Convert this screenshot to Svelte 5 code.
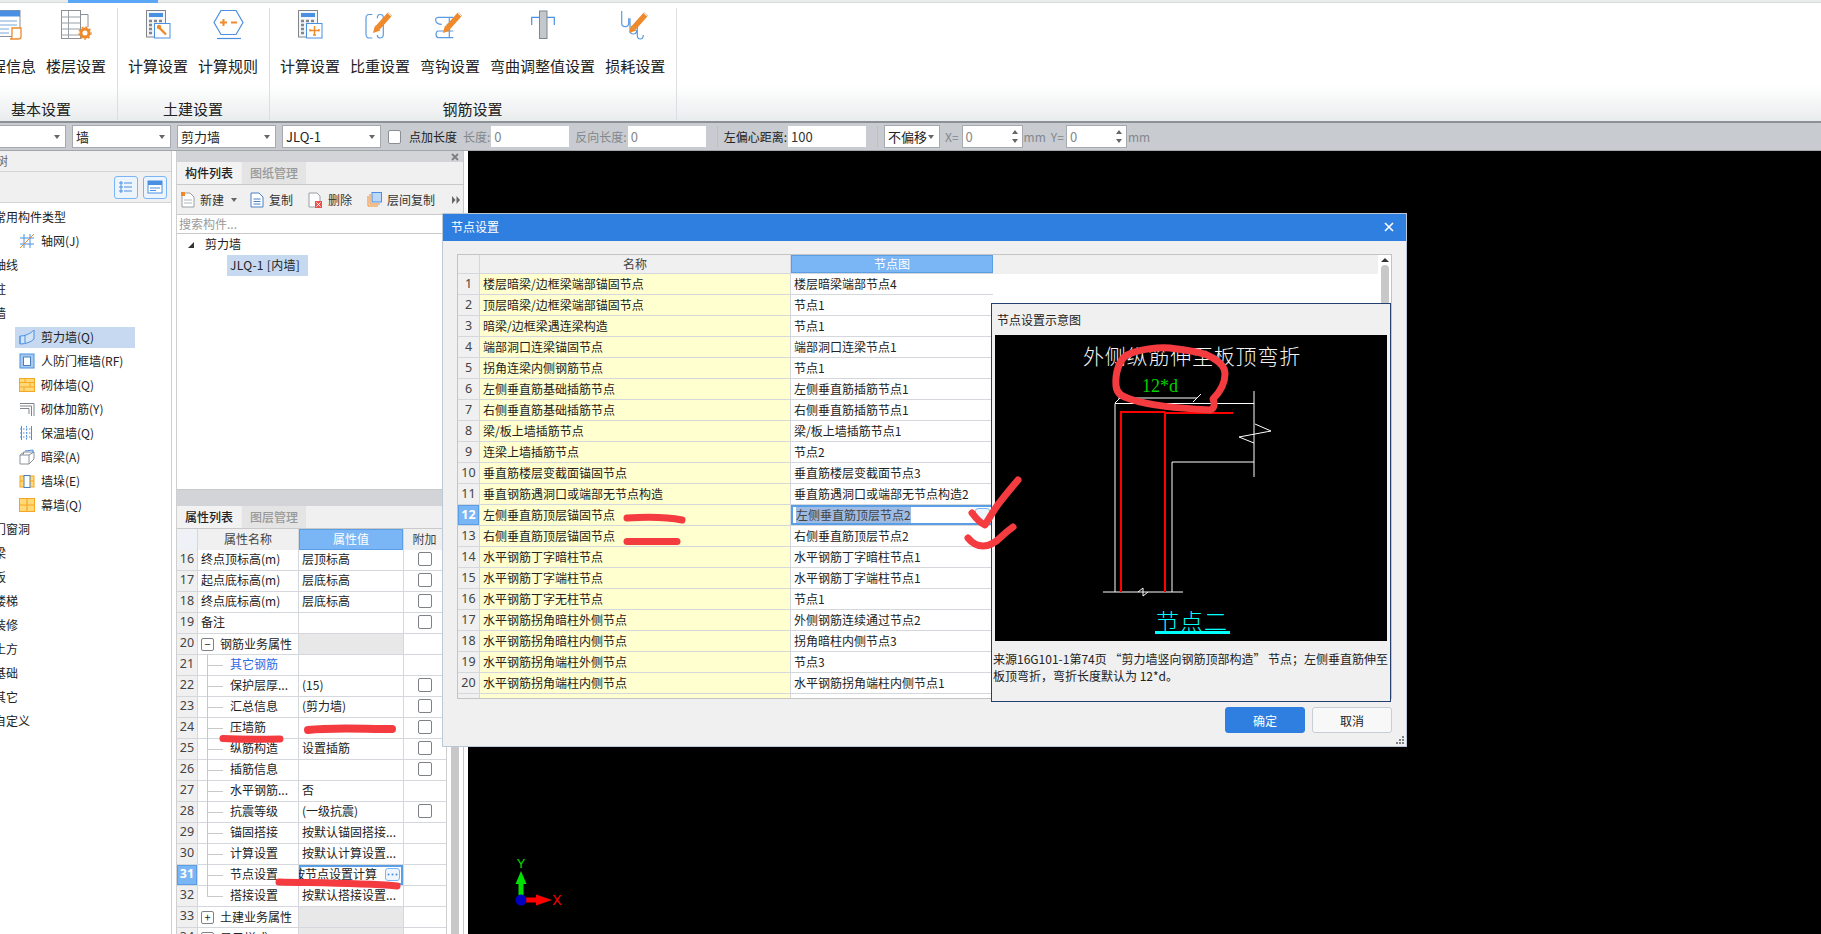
<script>
  const propRows = [
    { n: 16, name: '终点顶标高(m)', val: '层顶标高', check: true },
    { n: 17, name: '起点底标高(m)', val: '层底标高', check: true },
    { n: 18, name: '终点底标高(m)', val: '层底标高', check: true },
    { n: 19, name: '备注', val: '', check: true },
    { n: 20, name: '钢筋业务属性', group: '−' },
    { n: 21, name: '其它钢筋', val: '', child: true, link: true },
    { n: 22, name: '保护层厚...', val: '(15)', child: true, check: true },
    { n: 23, name: '汇总信息', val: '(剪力墙)', child: true, check: true },
    { n: 24, name: '压墙筋', val: '', child: true, check: true },
    { n: 25, name: '纵筋构造', val: '设置插筋', child: true, check: true },
    { n: 26, name: '插筋信息', val: '', child: true, check: true },
    { n: 27, name: '水平钢筋...', val: '否', child: true },
    { n: 28, name: '抗震等级', val: '(一级抗震)', child: true, check: true },
    { n: 29, name: '锚固搭接', val: '按默认锚固搭接...', child: true },
    { n: 30, name: '计算设置', val: '按默认计算设置...', child: true },
    { n: 31, name: '节点设置', val: '按节点设置计算', child: true, active: true },
    { n: 32, name: '搭接设置', val: '按默认搭接设置...', child: true, last: true },
    { n: 33, name: '土建业务属性', group: '+' },
    { n: 34, name: '显示样式', group: '+' }
  ];

  const nodeRows = [
    ['楼层暗梁/边框梁端部锚固节点', '楼层暗梁端部节点4'],
    ['顶层暗梁/边框梁端部锚固节点', '节点1'],
    ['暗梁/边框梁遇连梁构造', '节点1'],
    ['端部洞口连梁锚固节点', '端部洞口连梁节点1'],
    ['拐角连梁内侧钢筋节点', '节点1'],
    ['左侧垂直筋基础插筋节点', '左侧垂直筋插筋节点1'],
    ['右侧垂直筋基础插筋节点', '右侧垂直筋插筋节点1'],
    ['梁/板上墙插筋节点', '梁/板上墙插筋节点1'],
    ['连梁上墙插筋节点', '节点2'],
    ['垂直筋楼层变截面锚固节点', '垂直筋楼层变截面节点3'],
    ['垂直钢筋遇洞口或端部无节点构造', '垂直筋遇洞口或端部无节点构造2'],
    ['左侧垂直筋顶层锚固节点', '左侧垂直筋顶层节点2'],
    ['右侧垂直筋顶层锚固节点', '右侧垂直筋顶层节点2'],
    ['水平钢筋丁字暗柱节点', '水平钢筋丁字暗柱节点1'],
    ['水平钢筋丁字端柱节点', '水平钢筋丁字端柱节点1'],
    ['水平钢筋丁字无柱节点', '节点1'],
    ['水平钢筋拐角暗柱外侧节点', '外侧钢筋连续通过节点2'],
    ['水平钢筋拐角暗柱内侧节点', '拐角暗柱内侧节点3'],
    ['水平钢筋拐角端柱外侧节点', '节点3'],
    ['水平钢筋拐角端柱内侧节点', '水平钢筋拐角端柱内侧节点1'],
    ['', '']
  ];

  const treeTop = [
    { text: '常用构件类型' },
    { text: '轴网(J)', icon: 'grid' },
    { text: '轴线' },
    { text: '柱' },
    { text: '墙' },
    { text: '剪力墙(Q)', icon: 'shear', selected: true },
    { text: '人防门框墙(RF)', icon: 'frame' },
    { text: '砌体墙(Q)', icon: 'brick' },
    { text: '砌体加筋(Y)', icon: 'rebar' },
    { text: '保温墙(Q)', icon: 'insul' },
    { text: '暗梁(A)', icon: 'beam' },
    { text: '墙垛(E)', icon: 'pier' },
    { text: '幕墙(Q)', icon: 'curtain' },
    { text: '门窗洞' },
    { text: '梁' },
    { text: '板' },
    { text: '楼梯' },
    { text: '装修' },
    { text: '土方' },
    { text: '基础' },
    { text: '其它' },
    { text: '自定义' }
  ];
</script>

{#snippet pencil()}
  <path d="M15.500 18L28 4" stroke="#ee8a2c" stroke-width="5.500" />
  <path d="M11 23l2-7.500 5.500 5z" fill="#ee8a2c" />
  <path d="M25.500 2.800l4.500 4" stroke="#fff" />
{/snippet}

{#snippet ribbonIcon(name)}
  <svg class="r-icon" viewBox="0 0 36 32" width="36" height="32" fill="none">
    {#if name === 'info'}
      <rect x="8" y="0.500" width="24" height="26" fill="#fff" stroke="#8a9199" />
      <rect x="8" y="0.500" width="24" height="6" fill="#4a90e2" />
      <path d="M11 11h18M11 15h18M11 19h10M11 23h10" stroke="#7aa7d8" />
      <path d="M24 18h9v9c0 2-2 2-3 2h-8c2 0 2-1 2-3z" fill="#fff" stroke="#ee8a2c" stroke-width="1.300" />
    {:else if name === 'floor'}
      <rect x="3.500" y="0.500" width="19" height="28" fill="#fff" stroke="#8a9199" />
      <path d="M3 7h19M3 13h19M3 19h19M3 25h19M10.500 1v28" stroke="#9aa0a6" />
      <path d="M22 4.500h8V17" stroke="#8a9199" />
      <circle cx="27" cy="23" r="4" fill="none" stroke="#ee8a2c" stroke-width="3" />
      <circle cx="27" cy="23" r="6" fill="none" stroke="#ee8a2c" stroke-width="1.400" stroke-dasharray="2 2" />
    {:else if name === 'calcWrench' || name === 'calcFork'}
      <rect x="6.500" y="0.500" width="19" height="26.500" fill="#f4f5f6" stroke="#80868c" />
      <rect x="9" y="3" width="14" height="4" fill="#4a90e2" />
      <path d="M9 11h3M14 11h3M19 11h3M9 15h3M14 15h3M9 19h3M9 23h3" stroke="#80868c" stroke-width="2.500" />
      <rect x="14.500" y="13.500" width="15.500" height="14.500" fill="#fff" stroke="#4a90e2" />
      {#if name === 'calcWrench'}
        <path d="M19 17.500l7 7" stroke="#ee8a2c" stroke-width="2.400" />
        <circle cx="19" cy="17" r="2.200" fill="#ee8a2c" />
      {:else}
        <path d="M22.500 16v9M18 20.500h9M18 19v2.500M27 19v2.500M21 25h3" stroke="#ee8a2c" stroke-width="1.400" />
      {/if}
    {:else if name === 'rule'}
      <path d="M11 0.500h15l7 12-7 12H11L4 12.500z" fill="#fff" stroke="#4a90e2" stroke-width="1.200" />
      <path d="M10 12.500h7M13.500 9v7M21 12.500h6" stroke="#ee8a2c" stroke-width="2" />
      <path d="M7 28.500h24" stroke="#4a90e2" stroke-width="1.200" />
    {:else if name === 'ratio'}
      <path d="M10.300 4.500H7c-2 0-3 1.500-3 3.500v16.500c0 2 1.500 3.500 3 3.500h3.300M15.300 8.300c0-2.500 1.200-3.800 2.700-3.800 2 0 3.300 1 3.300 2.800v17.200c0 2-1.500 3.500-3.300 3.500-1.500 0-2.700-1-2.700-3" stroke="#5a9be0" stroke-width="1.200" />
      {@render pencil()}
    {:else if name === 'hook'}
      <path d="M21.300 7.300h-15c-2.500 0-3 2-2.500 3.500.5 2 2.500 3.500 6 3.500M14.700 14.300h6.600M17.300 7.300v20.400M21.300 21h-15c-3 0-3 6.700 0 6.700h15" stroke="#5a9be0" stroke-width="1.200" />
      {@render pencil()}
    {:else if name === 'bend'}
      <path d="M6.700 15V7.300h22.600V15" stroke="#4a90e2" stroke-width="1.200" />
      <rect x="14.500" y="1" width="7.500" height="27.500" fill="#c3c8cd" stroke="#80868c" />
    {:else if name === 'loss'}
      <path d="M4.700 1v12.300c0 2 1.500 3.400 3.500 3.400s3.500-1.400 3.500-3.400v-5M13 8.300V20c0 2.500 1.500 4 3.300 4s3.400-1.500 3.400-4M20.300 15v10c0 2.500 1.200 4 2.900 4s3.100-1.500 3.100-4" stroke="#5a9be0" stroke-width="1.200" />
      <g transform="translate(1 0)">{@render pencil()}</g>
    {/if}
  </svg>
{/snippet}

{#snippet treeIcon(name)}
  <svg viewBox="0 0 16 16" width="16" height="16" fill="none">
    {#if name === 'grid'}
      <path d="M1 5h14M1 11h14M5 1v14M11 1v14" stroke="#4a90e2" />
      <path d="M1 15L15 1" stroke="#ee8a2c" />
    {:else if name === 'shear'}
      <path d="M1 7c5 0 10-2 14-6v9c-3 3-8 5-14 5z" fill="#d3e4f6" stroke="#4a90e2" />
      <path d="M1 7v8M6 6v8" stroke="#4a90e2" />
    {:else if name === 'frame'}
      <rect x="1" y="1" width="14" height="14" fill="#a9cbef" stroke="#4a90e2" />
      <rect x="4.500" y="4" width="7" height="8.500" fill="#fff" stroke="#4a80c0" />
    {:else if name === 'brick' || name === 'curtain'}
      <rect x="0.500" y="1.500" width="15" height="13" fill="#ffd976" stroke="#f5a623" />
      {#if name === 'brick'}
        <path d="M1 5.500h14M1 10h14M6 2v3.500M11 5.500V10M5 10v4.500" stroke="#f5a623" />
      {:else}
        <path d="M1 8h14M8 2v12" stroke="#f5a623" stroke-width="1.200" />
      {/if}
    {:else if name === 'rebar'}
      <path d="M1 2.500h14V15M1 5h11.500v10M1 7.500h9V13" stroke="#80868c" />
    {:else if name === 'insul'}
      <path d="M2.500 1v14M12.500 1v14" stroke="#4a90e2" />
      <path d="M7.500 1v14M1 4h11M1 8h11M1 12h11" stroke="#4a90e2" stroke-dasharray="1.500 1.500" />
    {:else if name === 'beam'}
      <path d="M1 6l4-3h10v7l-5 5H1z" fill="#fff" stroke="#8a9199" />
      <path d="M1 6h9l5-3M10 6v9M5 3l-1 3" stroke="#8a9199" />
      <path d="M6 2l8-1v3" stroke="#4a90e2" />
    {:else if name === 'pier'}
      <rect x="1" y="3" width="14" height="11" fill="#ffd976" stroke="#f5a623" />
      <rect x="5" y="2.500" width="6" height="12" fill="#fff" stroke="#4a80c0" />
      <path d="M1 8h4M11 8h4" stroke="#f5a623" />
    {/if}
  </svg>
{/snippet}

<div class="app">
  <header class="ribbon">
    <span class="ribbon-tab"></span>
    <section class="r-group first">
      <div class="r-buttons">
        <div class="r-btn">{@render ribbonIcon('info')}<span>工程信息</span></div>
        <div class="r-btn">{@render ribbonIcon('floor')}<span>楼层设置</span></div>
      </div>
      <div class="r-label">基本设置</div>
    </section>
    <section class="r-group">
      <div class="r-buttons">
        <div class="r-btn">{@render ribbonIcon('calcWrench')}<span>计算设置</span></div>
        <div class="r-btn">{@render ribbonIcon('rule')}<span>计算规则</span></div>
      </div>
      <div class="r-label">土建设置</div>
    </section>
    <section class="r-group">
      <div class="r-buttons">
        <div class="r-btn">{@render ribbonIcon('calcFork')}<span>计算设置</span></div>
        <div class="r-btn">{@render ribbonIcon('ratio')}<span>比重设置</span></div>
        <div class="r-btn">{@render ribbonIcon('hook')}<span>弯钩设置</span></div>
        <div class="r-btn">{@render ribbonIcon('bend')}<span>弯曲调整值设置</span></div>
        <div class="r-btn">{@render ribbonIcon('loss')}<span>损耗设置</span></div>
      </div>
      <div class="r-label">钢筋设置</div>
    </section>
  </header>

  <div class="toolbar">
    <div class="combo c-first"><span></span><i></i></div>
    <div class="combo"><span>墙</span><i></i></div>
    <div class="combo"><span>剪力墙</span><i></i></div>
    <div class="combo"><span>JLQ-1</span><i></i></div>
    <span class="tb-check"></span>
    <span class="tb-text tb-dot">点加长度</span>
    <span class="tb-text muted tb-len">长度:</span>
    <div class="tb-input">0</div>
    <span class="tb-text muted tb-rev">反向长度:</span>
    <div class="tb-input">0</div>
    <span class="tb-sep"></span>
    <span class="tb-text">左偏心距离:</span>
    <div class="tb-input dark">100</div>
    <span class="tb-sep"></span>
    <div class="combo small"><span>不偏移</span><i></i></div>
    <span class="tb-text muted tb-x">X=</span>
    <div class="tb-spin">0<b></b></div>
    <span class="tb-text muted">mm</span>
    <span class="tb-text muted tb-y">Y=</span>
    <div class="tb-spin">0<b></b></div>
    <span class="tb-text muted">mm</span>
  </div>

  <main class="main">
    <aside class="nav">
      <div class="nav-title"><span>导航树</span></div>
      <div class="nav-tools">
        <span class="nav-btn">
          <svg viewBox="0 0 14 14" width="14" height="14" fill="none" stroke="#4a90e2"><path d="M1 2h2v2H1zM1 6h2v2H1zM1 10h2v2H1zM5 3h8M5 7h8M5 11h8" /></svg>
        </span>
        <span class="nav-btn">
          <svg viewBox="0 0 16 14" width="16" height="14" fill="none"><rect x="1" y="1" width="14" height="12" fill="#fff" stroke="#4a90e2" /><rect x="1" y="1" width="14" height="4" fill="#4a90e2" /><path d="M3 8h10M3 10.500h6" stroke="#4a90e2" /></svg>
        </span>
      </div>
      <div class="nav-tree">
        {#each treeTop as item}
          {#if item.icon}
            <div class="nav-item" class:selected={item.selected}>
              {@render treeIcon(item.icon)}
              <span>{item.text}</span>
            </div>
          {:else}
            <div class="nav-folder">{item.text}</div>
          {/if}
        {/each}
      </div>
    </aside>

    <section class="mid">
      <div class="strip">
        <svg class="close" viewBox="0 0 8 8" width="8" height="8" stroke="#7b7e82" stroke-width="1.800"><path d="M1 1l6 6M7 1L1 7" /></svg>
      </div>
      <div class="tabs">
        <span class="tab active">构件列表</span>
        <span class="tab">图纸管理</span>
      </div>
      <div class="list-tools">
        <span class="tool t-new">
          <svg viewBox="0 0 14 16" width="14" height="16" fill="none"><path d="M1 1h8l4 4v10H1z" fill="#fff" stroke="#9aa0a6" /><path d="M3 8h8M3 11h8" stroke="#b0b5ba" /><rect x="0" y="0" width="4" height="4" fill="#ee8a2c" /></svg>
          新建<i class="caret"></i>
        </span>
        <span class="tool t-copy">
          <svg viewBox="0 0 14 16" width="14" height="16" fill="none"><path d="M1 1h8l4 4v10H1z" fill="#fff" stroke="#4a80c0" /><path d="M3.500 7h7M3.500 9.500h7M3.500 12h7" stroke="#4a80c0" /></svg>
          复制
        </span>
        <span class="tool t-del">
          <svg viewBox="0 0 15 16" width="15" height="16" fill="none"><path d="M1 1h8l3 3v11H1z" fill="#fff" stroke="#9aa0a6" /><rect x="7" y="9" width="7" height="7" fill="#e9514a" /><path d="M8.500 10.500l4 4M12.500 10.500l-4 4" stroke="#fff" /></svg>
          删除
        </span>
        <span class="tool t-floor">
          <svg viewBox="0 0 15 15" width="15" height="15" fill="none"><path d="M1 4v10h10" stroke="#ee8a2c" /><path d="M3 2v10h10" stroke="#ee8a2c" /><rect x="5" y="0.500" width="9.500" height="9.500" fill="#bcd8f8" stroke="#4a90e2" /></svg>
          层间复制
        </span>
        <span class="more">
          <svg viewBox="0 0 8 8" width="8" height="8" fill="#666"><path d="M0 0l3.500 4L0 8zM4.500 0L8 4 4.500 8z" /></svg>
        </span>
      </div>
      <div class="search">搜索构件...</div>
      <div class="list-tree">
        <div class="lt-root"><i class="lt-tri"></i>剪力墙</div>
        <div class="lt-leaf">JLQ-1 [内墙]</div>
      </div>

      <div class="strip lower"></div>
      <div class="tabs">
        <span class="tab active">属性列表</span>
        <span class="tab">图层管理</span>
      </div>

      <div class="prop-wrap">
        <div class="props">
          <div class="p-row p-head">
            <div class="p-n"></div>
            <div class="p-name">属性名称</div>
            <div class="p-val">属性值</div>
            <div class="p-add">附加</div>
          </div>
          {#each propRows as row}
            <div class="p-row" class:active={row.active}>
              <div class="p-n">{row.n}</div>
              <div class="p-name" class:child={row.child} class:last={row.last} class:link={row.link} class:grp={row.group}>
                {#if row.group}<span class="box">{row.group}</span>{/if}
                {row.name}
              </div>
              <div class="p-val" class:grey={row.group}>
                {#if row.active}
                  <span class="clip">{row.val}</span>
                  <span class="dots">
                    <svg viewBox="0 0 11 3" width="11" height="3" fill="#4a90e2"><circle cx="1.500" cy="1.500" r="1" /><circle cx="5.500" cy="1.500" r="1" /><circle cx="9.500" cy="1.500" r="1" /></svg>
                  </span>
                {:else}
                  {row.val ?? ''}
                {/if}
              </div>
              <div class="p-add">{#if row.check}<span class="cb"></span>{/if}</div>
            </div>
          {/each}
        </div>
        <div class="p-scroll"><span></span></div>
      </div>
    </section>

    <section class="canvas">
      <svg class="axis" viewBox="0 0 100 60" width="100" height="60">
        <path d="M33 38V18" stroke="#00e000" stroke-width="5" />
        <path d="M27.500 22L33 9l5.500 13z" fill="#00e000" />
        <text x="33" y="6" fill="#00e000" text-anchor="middle" font-size="13">Y</text>
        <path d="M33 38h20" stroke="#ff0000" stroke-width="5" />
        <path d="M48 32.500L64 38l-16 5.500z" fill="#ff0000" />
        <text x="69" y="43" fill="#ff0000" text-anchor="middle" font-size="14">X</text>
        <circle cx="33" cy="38" r="5.500" fill="#0000c0" />
      </svg>
    </section>
  </main>

  <div class="dialog">
    <div class="dlg-head">
      <span>节点设置</span>
      <svg viewBox="0 0 10 10" width="10" height="10" stroke="#fff" stroke-width="1.600"><path d="M1 1l8 8M9 1l-8 8" /></svg>
    </div>
    <div class="dlg-body">
      <div class="nodes">
        <div class="n-rows">
          <div class="n-row n-head">
            <div class="n-n"></div>
            <div class="n-name">名称</div>
            <div class="n-val">节点图</div>
          </div>
          {#each nodeRows as row, i}
            <div class="n-row" class:active={i === 11}>
              <div class="n-n">{row[0] ? i + 1 : ''}</div>
              <div class="n-name">{row[0]}</div>
              <div class="n-val">
                {#if i === 11}
                  <span class="sel">{row[1]}</span><span class="n-dots"></span>
                {:else}
                  {row[1]}
                {/if}
              </div>
            </div>
          {/each}
        </div>
        <div class="n-scroll"><i></i><span></span></div>
      </div>
      <div class="dlg-foot">
        <button class="ok">确定</button>
        <button class="cancel">取消</button>
      </div>
    </div>

    <div class="preview">
      <div class="pv-title">节点设置示意图</div>
      <svg class="pv-img" viewBox="0 0 392 306" width="392" height="306">
        <rect width="392" height="306" fill="#000" />
        <text x="88" y="29" class="pv-head">外侧纵筋伸至板顶弯折</text>
        <text x="147" y="57" class="pv-dim">12*d</text>
        <g stroke="#fff" stroke-width="1" fill="none">
          <path d="M123 63h79M198 67l8-8M120 68l6-6" />
          <path d="M120 257V68.500h139M259 56v86M177 257V127h82M108 257h80" />
          <path d="M260 89l16 7-32 6 15 6M143 257l5-4v8l5-4" />
        </g>
        <g stroke="#ff0000" stroke-width="2" fill="none">
          <path d="M126 257V77h44M170 257V78h68" />
        </g>
        <text x="161" y="295" class="pv-node">节点二</text>
        <rect x="160" y="296" width="75" height="3" fill="#00ffff" />
      </svg>
      <p class="pv-desc">来源16G101-1第74页 “剪力墙竖向钢筋顶部构造” 节点；左侧垂直筋伸至<br />板顶弯折，弯折长度默认为 12*d。</p>
    </div>
    <svg class="grip" viewBox="0 0 8 8" width="8" height="8" fill="#7d8287"><path d="M6 0h2v2H6zM3 3h2v2H3zM6 3h2v2H6zM0 6h2v2H0zM3 6h2v2H3zM6 6h2v2H6z" /></svg>
  </div>

  <svg class="marks" viewBox="0 0 1821 934" width="1821" height="934" fill="none" stroke="#f43b40" stroke-linecap="round" stroke-linejoin="round">
    <path d="M223 738.500c18 1 38 1 57 .5" stroke-width="7" />
    <path d="M308 730c25-3 55-1 84-1" stroke-width="8" />
    <path d="M279 882c40 1 80 1 118 4" stroke-width="7" />
    <path d="M627 518c18-1 40-1 55 2" stroke-width="7" />
    <path d="M627 541.500c16 0 34 0 50 0" stroke-width="7" />
    <path d="M1127 355c-8 5-12 18-11 31 1 9 8 11 14 13 20 7 48 9 80 11 5-2 5-6 3-11 8-8 12-15 12-25 0-8-6-12-12-16-10-6-22-7-43-10-10-1-32 1-43 7z" stroke-width="7" />
    <path d="M972 513c3 4 8 10 13 12 5-8 10-17 15-23 6-8 12-15 18-22" stroke-width="7" />
    <path d="M968 538c4 5 9 8 15 8 8 0 14-5 18-9 4-4 8-7 12-10" stroke-width="7" />
  </svg>
</div>

<style>
  :global(body) {
    margin: 0;
    background: #000;
  }
  .app {
    position: relative;
    width: 1821px;
    height: 934px;
    overflow: hidden;
    display: flex;
    flex-direction: column;
    font-family: "Noto Sans CJK SC", "Noto Sans", sans-serif;
    font-size: 12px;
    color: #222;
    background: #fff;
  }

  /* ribbon */
  .ribbon {
    position: relative;
    flex: 0 0 121px;
    box-sizing: border-box;
    display: flex;
    padding: 6px 0 1px;
    border-top: 2px solid transparent;
    background: linear-gradient(#fff 0, #fff 65px, #fff 70%, #e9eced 100%);
    box-shadow: inset 0 1px 0 #dadada;
  }
  .ribbon-tab {
    position: absolute;
    left: 68px;
    top: -2px;
    width: 90px;
    height: 3px;
    background: #5ba6f6;
  }
  .r-group {
    display: flex;
    flex-direction: column;
    padding: 0 6px 0 5px;
    border-right: 1px solid #dcdfe2;
  }
  .r-group.first {
    margin-left: -34px;
    padding-right: 6px;
  }
  .r-buttons {
    display: flex;
    flex: 1;
  }
  .r-btn {
    display: flex;
    flex-direction: column;
    align-items: center;
    padding: 2px 5px 0;
    min-width: 60px;
    font-size: 15px;
    line-height: 20px;
    white-space: nowrap;
  }
  .r-btn span {
    margin-top: 14px;
  }
  .r-label {
    text-align: center;
    font-size: 15px;
    line-height: 20px;
    padding-bottom: 1px;
  }

  /* toolbar */
  .toolbar {
    flex: 0 0 30px;
    box-sizing: border-box;
    display: flex;
    align-items: center;
    gap: 6px;
    background: #c8cbd0;
    border-top: 2px solid #8c9196;
    border-bottom: 1px solid #a3a6aa;
    overflow: hidden;
    white-space: nowrap;
  }
  .combo {
    box-sizing: border-box;
    position: relative;
    width: 99px;
    height: 23px;
    padding-left: 3px;
    background: #fff;
    border: 1px solid #a6a9ae;
    line-height: 21px;
    font-size: 13px;
  }
  .combo i {
    position: absolute;
    right: 5px;
    top: 9px;
    border: 3px solid transparent;
    border-top: 4px solid #666;
    border-bottom: 0;
  }
  .c-first {
    margin-left: -33px;
  }
  .combo.small {
    width: 56px;
    margin-right: -1px;
  }
  .tb-check {
    width: 13px;
    height: 14px;
    margin-left: 1px;
    background: #fff;
    border: 1px solid #8b8e93;
    border-radius: 2px;
    box-sizing: border-box;
  }
  .tb-text {
    font-size: 12px;
    color: #222;
  }
  .tb-text.muted {
    color: #84878c;
  }
  .tb-dot {
    margin-left: 2px;
  }
  .tb-len {
    margin-right: -5px;
  }
  .tb-rev {
    margin-right: -5px;
  }
  .tb-input {
    width: 78px;
    height: 21px;
    padding-left: 3px;
    box-sizing: border-box;
    background: #fff;
    color: #84878c;
    line-height: 21px;
    font-size: 13px;
  }
  .tb-input.dark {
    color: #333;
    margin-left: -5px;
  }
  .tb-sep {
    width: 1px;
    height: 21px;
    margin-left: 5px;
    background: #bcbfc4;
  }
  .tb-x {
    margin-right: -3px;
  }
  .tb-y {
    margin-left: -1px;
    margin-right: -4px;
  }
  .tb-spin {
    position: relative;
    box-sizing: border-box;
    width: 61px;
    height: 23px;
    margin-right: -5px;
    padding-left: 3px;
    line-height: 21px;
    font-size: 13px;
    background: #fff;
    border: 1px solid #a6a9ae;
    color: #84878c;
  }
  .tb-spin b::before,
  .tb-spin b::after {
    content: "";
    position: absolute;
    right: 4px;
    border: 3px solid transparent;
  }
  .tb-spin b::before {
    top: 4px;
    border-bottom: 4px solid #666;
    border-top: 0;
  }
  .tb-spin b::after {
    bottom: 4px;
    border-top: 4px solid #666;
    border-bottom: 0;
  }

  /* main */
  .main {
    flex: 1;
    display: flex;
    min-height: 0;
  }
  .nav {
    box-sizing: content-box;
    flex: 0 0 171px;
    background: #fff;
    border-right: 1px solid #cfcfcf;
    overflow: hidden;
  }
  .nav-title {
    height: 20px;
    line-height: 20px;
    background: #f0f0f0;
    border-bottom: 1px solid #d4d4d4;
    color: #666;
  }
  .nav-title span {
    margin-left: -28px;
    display: inline-block;
  }
  .nav-tools {
    box-sizing: border-box;
    height: 31px;
    display: flex;
    justify-content: flex-end;
    align-items: center;
    gap: 5px;
    padding-right: 4px;
    background: #f0f0f0;
    border-bottom: 1px solid #d4d4d4;
  }
  .nav-btn {
    box-sizing: border-box;
    width: 24px;
    height: 23px;
    display: flex;
    align-items: center;
    justify-content: center;
    border: 1px solid #7ab6f5;
    border-radius: 3px;
    background: #ecf4fd;
  }
  .nav-tree {
    padding-top: 2px;
  }
  .nav-folder,
  .nav-item {
    height: 24px;
    line-height: 24px;
    white-space: nowrap;
  }
  .nav-folder {
    margin-left: -6px;
  }
  .nav-item {
    box-sizing: border-box;
    width: 120px;
    margin-left: 15px;
    padding-left: 4px;
    display: flex;
    align-items: center;
    gap: 6px;
    height: 24px;
  }
  .nav-item.selected {
    background: linear-gradient(transparent 2px, #c6d9f1 2px, #c6d9f1 23px, transparent 23px);
  }

  /* middle panel */
  .mid {
    flex: 0 0 286px;
    margin-left: 4px;
    border-left: 1px solid #cfcfcf;
    border-right: 1px solid #c8c8c8;
    background: #f0f0f0;
    display: flex;
    flex-direction: column;
    min-height: 0;
    overflow: hidden;
  }
  .strip {
    position: relative;
    flex: 0 0 11px;
    background: #d2d4d8;
  }
  .strip .close {
    position: absolute;
    right: 4px;
    top: 2px;
  }
  .strip.lower {
    flex-basis: 16px;
  }
  .tabs {
    flex: 0 0 22px;
    display: flex;
    background: #f0f0f0;
    border-bottom: 1px solid #c9c9c9;
  }
  .tab {
    width: 64px;
    margin-right: 1px;
    text-align: center;
    line-height: 21px;
    font-weight: 500;
    color: #999;
    background: #e4e4e4;
  }
  .tab.active {
    color: #222;
    background: #f2f2f2;
  }
  .list-tools {
    flex: 0 0 29px;
    position: relative;
    display: flex;
    align-items: center;
    border-bottom: 1px solid #c9c9c9;
    color: #333;
  }
  .tool {
    display: flex;
    align-items: center;
    gap: 5px;
    white-space: nowrap;
  }
  .t-new {
    margin-left: 4px;
  }
  .t-copy {
    margin-left: 13px;
  }
  .t-del {
    margin-left: 15px;
  }
  .t-floor {
    margin-left: 15px;
  }
  .caret {
    margin-left: 2px;
    border: 3px solid transparent;
    border-top: 4px solid #666;
    border-bottom: 0;
  }
  .more {
    margin-left: auto;
    margin-right: 3px;
    display: flex;
  }
  .search {
    flex: 0 0 18px;
    padding-left: 2px;
    line-height: 17px;
    color: #9a9a9a;
    background: #fff;
    border-bottom: 1px solid #c9c9c9;
  }
  .list-tree {
    flex: 0 0 256px;
    box-sizing: border-box;
    background: #fff;
    border-bottom: 1px solid #c9c9c9;
  }
  .lt-root {
    height: 21px;
    line-height: 20px;
    padding-left: 28px;
    position: relative;
  }
  .lt-tri {
    position: absolute;
    left: 11px;
    top: 8px;
    border-left: 6px solid transparent;
    border-bottom: 6px solid #333;
  }
  .lt-leaf {
    box-sizing: border-box;
    width: 81px;
    height: 21px;
    margin-left: 50px;
    padding-left: 3px;
    line-height: 20px;
    background: #c6d9f1;
    white-space: nowrap;
    letter-spacing: 0.300px;
  }
  .prop-wrap {
    flex: 1;
    display: flex;
    background: #fff;
    min-height: 0;
    overflow: hidden;
  }
  .props {
    flex: 0 0 269px;
    border-right: 1px solid #cfcfcf;
  }
  .p-row {
    display: grid;
    grid-template-columns: 21px 101px 105px 41px;
    height: 21px;
    box-sizing: border-box;
    border-bottom: 1px solid #d4d8dd;
    line-height: 18px;
  }
  .p-head {
    height: 21px;
    background: #f0f0f0;
    color: #444;
    text-align: center;
    line-height: 19px;
  }
  .p-head .p-n {
    background: #eef1f5;
  }
  .p-head .p-val {
    background: #7ab6f5;
    color: #fff;
    box-shadow: inset 0 0 0 1px #5a9fe6;
    padding: 0;
  }
  .p-head .p-name {
    padding: 0;
    background: #f0f0f0;
  }
  .p-head .p-add {
    background: #f0f0f0;
  }
  .p-n {
    background: #f0f0f0;
    border-right: 1px solid #d4d8dd;
    text-align: center;
    color: #444;
    font-family: "Noto Sans", sans-serif;
    font-size: 12.500px;
  }
  .p-name {
    position: relative;
    padding-left: 3px;
    border-right: 1px solid #d4d8dd;
    white-space: nowrap;
  }
  .p-name.child {
    padding-left: 32px;
  }
  .p-name.child::before {
    content: "";
    position: absolute;
    left: 9px;
    top: 10px;
    width: 16px;
    height: 1px;
    background: #c9c9c9;
  }
  .p-name.child::after {
    content: "";
    position: absolute;
    left: 9px;
    top: -1px;
    width: 1px;
    height: 22px;
    background: #c9c9c9;
  }
  .p-name.last::after {
    height: 12px;
  }
  .p-name.link {
    color: #2b6be4;
  }
  .p-name.grp {
    display: flex;
    align-items: center;
    gap: 6px;
    padding-left: 3px;
  }
  .box {
    box-sizing: border-box;
    width: 13px;
    height: 13px;
    display: flex;
    align-items: center;
    justify-content: center;
    border: 1px solid #7e8287;
    border-radius: 2px;
    font-size: 11px;
    line-height: 11px;
  }
  .p-val {
    padding-left: 3px;
    border-right: 1px solid #d4d8dd;
    white-space: nowrap;
    overflow: hidden;
    position: relative;
  }
  .p-val.grey {
    background: #e8e8e8;
  }
  .p-add {
    display: flex;
    align-items: center;
    justify-content: center;
    padding-bottom: 2px;
  }
  .cb {
    box-sizing: border-box;
    width: 14px;
    height: 14px;
    border: 1px solid #7e8287;
    border-radius: 2px;
    background: #fff;
  }
  .p-row.active .p-n {
    background: #7ab6f5;
    color: #fff;
    font-weight: 700;
    box-shadow: inset 0 0 0 1px #5a9fe6;
  }
  .p-row.active .p-val {
    box-shadow: inset 0 0 0 2px #5a9fe6;
  }
  .clip {
    display: block;
    margin-left: -9px;
  }
  .dots {
    position: absolute;
    right: 3px;
    top: 3px;
    width: 15px;
    height: 13px;
    box-sizing: border-box;
    display: flex;
    align-items: center;
    justify-content: center;
    border: 1px solid #7ab6f5;
    border-radius: 3px;
    background: #eef5fd;
  }
  .p-scroll {
    flex: 1;
    padding: 0 3px 0 4px;
  }
  .p-scroll span {
    display: block;
    width: 8px;
    height: 100%;
    background: #c8c8c8;
  }

  /* canvas */
  .canvas {
    position: relative;
    flex: 1;
    margin-left: 4px;
    background: #000;
  }
  .axis {
    position: absolute;
    left: 20px;
    top: 711px;
    overflow: visible;
    font-family: "Liberation Sans", sans-serif;
  }

  /* dialog */
  .dialog {
    position: absolute;
    left: 443px;
    top: 214px;
    width: 963px;
    height: 532px;
    background: #f0f0f0;
    box-shadow: 0 0 0 1px #bcc7d8;
    display: flex;
    flex-direction: column;
  }
  .dlg-head {
    flex: 0 0 27px;
    box-sizing: border-box;
    display: flex;
    justify-content: space-between;
    align-items: center;
    padding: 0 12px 2px 8px;
    background: #2e7fe0;
    color: #fff;
  }
  .dlg-body {
    flex: 1;
    padding: 13px 14px 0;
  }
  .nodes {
    display: flex;
    height: 445px;
    box-sizing: border-box;
    border: 1px solid #c4c4c4;
    background: #fff;
    overflow: hidden;
  }
  .n-rows {
    flex: 1;
  }
  .n-row {
    display: grid;
    grid-template-columns: 22px 311px 202px 1fr;
    box-sizing: border-box;
    height: 21px;
    line-height: 20px;
  }
  .n-head {
    height: 19px;
    background: #f0f0f0;
    color: #444;
    text-align: center;
    line-height: 18px;
  }
  .n-n {
    background: #f0f0f0;
    border-right: 1px solid #d4d8dd;
    border-bottom: 1px solid #d4d8dd;
    text-align: center;
    color: #444;
    font-family: "Noto Sans", sans-serif;
    font-size: 12.500px;
  }
  .n-name {
    padding-left: 3px;
    background: #ffffcf;
    border-bottom: 1px solid #d4d8dd;
    border-right: 1px solid #d4d8dd;
    white-space: nowrap;
  }
  .n-val {
    position: relative;
    padding-left: 3px;
    border-bottom: 1px solid #d4d8dd;
    white-space: nowrap;
  }
  .n-head .n-name {
    background: #f0f0f0;
    padding: 0;
  }
  .n-head .n-val {
    background: #7ab6f5;
    color: #fff;
    padding: 0;
    box-shadow: inset 0 0 0 1px #5a9fe6;
  }
  .n-row.active .n-n {
    background: #7ab6f5;
    color: #fff;
    font-weight: 700;
    box-shadow: inset 0 0 0 1px #5a9fe6;
  }
  .n-row.active .n-val {
    box-shadow: inset 0 0 0 2px #5a9fe6;
    padding-left: 5px;
  }
  .sel {
    background: #9dbbe3;
    color: #444;
    display: inline-block;
    line-height: 16px;
    margin-top: 2px;
  }
  .n-dots {
    position: absolute;
    right: 3px;
    top: 3px;
    width: 15px;
    height: 14px;
    border: 1px solid #7ab6f5;
    border-radius: 3px;
    background: #eef5fd;
    box-sizing: border-box;
  }
  .n-scroll {
    flex: 0 0 13px;
    display: flex;
    flex-direction: column;
    align-items: center;
    padding-top: 3px;
    gap: 3px;
  }
  .n-scroll i {
    border: 4px solid transparent;
    border-bottom: 4px solid #333;
    border-top: 0;
  }
  .n-scroll span {
    width: 8px;
    height: 40px;
    border-radius: 4px;
    background: #c8c8c8;
  }
  .dlg-foot {
    display: flex;
    justify-content: flex-end;
    gap: 7px;
    margin-top: 8px;
  }
  .dlg-foot button {
    width: 80px;
    height: 26px;
    border-radius: 3px;
    font: inherit;
    padding: 0;
  }
  .ok {
    background: #2e7fe0;
    border: 1px solid #2e7fe0;
    color: #fff;
  }
  .cancel {
    background: #f8f8f8;
    border: 1px solid #c9ced6;
    color: #222;
  }
  .grip {
    position: absolute;
    right: 2px;
    bottom: 2px;
  }

  /* preview overlays the table */
  .preview {
    position: absolute;
    left: 548px;
    top: 89px;
    box-sizing: border-box;
    width: 400px;
    height: 399px;
    padding: 0 3px;
    background: #f0f0f0;
    border: 1px solid #24406f;
  }
  .pv-title {
    height: 31px;
    line-height: 32px;
    padding-left: 2px;
  }
  .pv-img {
    display: block;
  }
  .pv-head {
    font-size: 21px;
    fill: #f4f4f4;
    font-weight: 300;
    letter-spacing: 0.800px;
  }
  .pv-dim {
    font-family: "Liberation Serif", serif;
    font-size: 18px;
    fill: #00d000;
  }
  .pv-node {
    font-size: 23px;
    font-weight: 300;
    letter-spacing: 1px;
    fill: #00ffff;
  }
  .pv-desc {
    margin: 9px -2px 0;
    line-height: 17px;
    white-space: nowrap;
  }

  .marks {
    position: absolute;
    left: 0;
    top: 0;
    pointer-events: none;
  }
</style>
